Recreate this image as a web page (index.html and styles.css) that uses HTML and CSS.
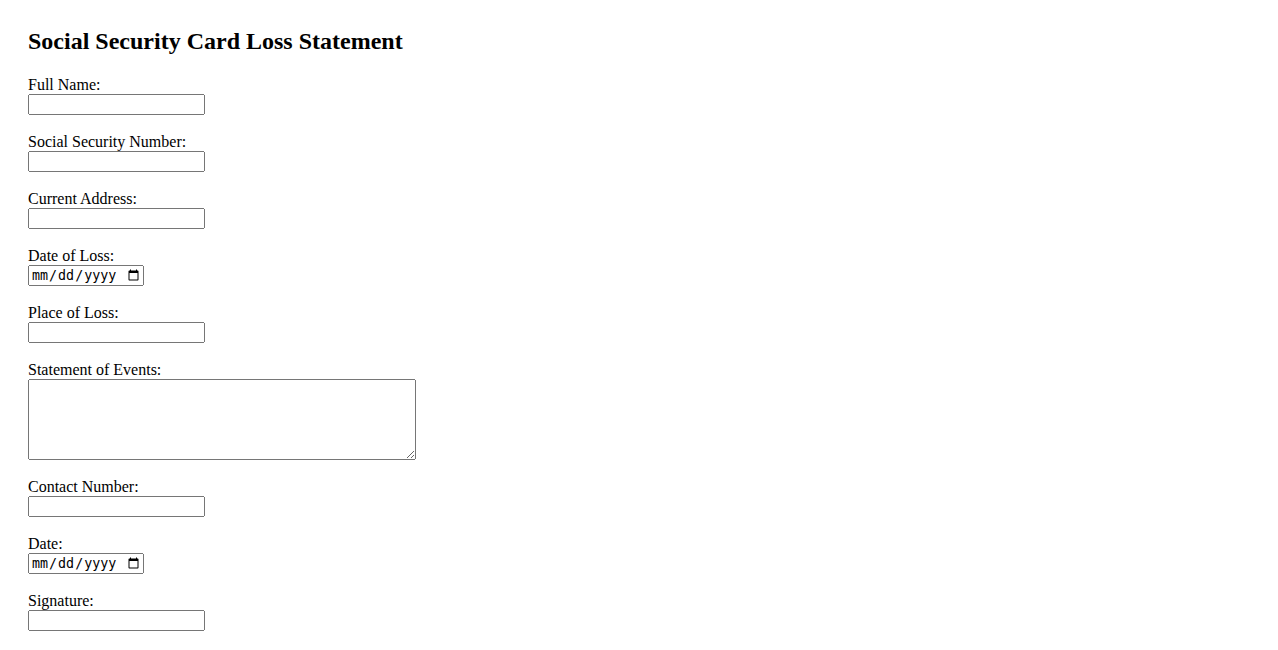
FILE: index.html
```html
<!DOCTYPE html>
<html>
<head>
<meta charset="utf-8">
<title>Social Security Card Loss Statement</title>
<link rel="stylesheet" href="styles.css">
</head>
<body>
<h2 class="title">Social Security Card Loss Statement</h2>
<form class="form">
  <div class="field">
    <label class="label" for="name">Full Name:</label>
    <input class="text" type="text" id="name">
  </div>
  <div class="field">
    <label class="label" for="ssn">Social Security Number:</label>
    <input class="text" type="text" id="ssn">
  </div>
  <div class="field">
    <label class="label" for="addr">Current Address:</label>
    <input class="text" type="text" id="addr">
  </div>
  <div class="field">
    <label class="label" for="dol">Date of Loss:</label>
    <input class="date" type="date" id="dol">
  </div>
  <div class="field">
    <label class="label" for="pol">Place of Loss:</label>
    <input class="text" type="text" id="pol">
  </div>
  <div class="field">
    <label class="label" for="soe">Statement of Events:</label>
    <textarea class="area" id="soe"></textarea>
  </div>
  <div class="field">
    <label class="label" for="phone">Contact Number:</label>
    <input class="text" type="text" id="phone">
  </div>
  <div class="field">
    <label class="label" for="date">Date:</label>
    <input class="date" type="date" id="date">
  </div>
  <div class="field">
    <label class="label" for="sig">Signature:</label>
    <input class="text" type="text" id="sig">
  </div>
</form>
</body>
</html>
```

FILE: styles.css
```css
html, body {
  background: #ffffff;
}
body {
  margin: 0;
  padding: 27px 28px 0 28px;
  font-family: "Liberation Serif", "Times New Roman", serif;
  font-size: 16px;
  color: #000000;
}
.title {
  margin: 0 0 20px 0;
  font-size: 24px;
  line-height: 28px;
  font-weight: bold;
}
.form {
  display: flex;
  flex-direction: column;
  gap: 17px;
}
.field {
  display: flex;
  flex-direction: column;
  align-items: flex-start;
}
.label {
  display: block;
  height: 19px;
  line-height: 19px;
}
.text, .date, .area {
  box-sizing: border-box;
  margin: 0;
  height: 21px;
}
.text {
  width: 177px;
}
.date {
  width: 116px;
}
.area {
  width: 388px;
  height: 81px;
  display: block;
}
```
